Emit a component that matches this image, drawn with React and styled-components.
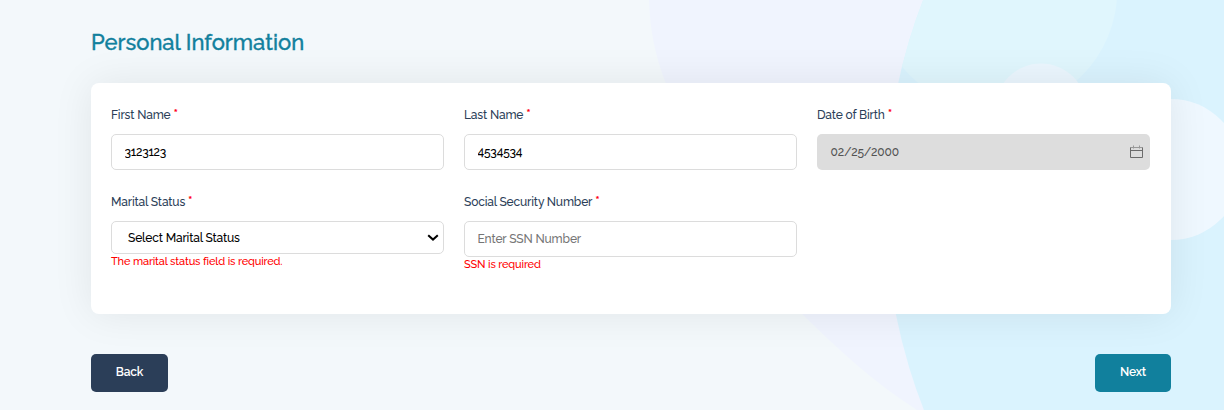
import React from "react";
import styled, { createGlobalStyle } from "styled-components";

const Global = createGlobalStyle`
  * { box-sizing: border-box; }
  body { margin: 0; font-family: Raleway, Lato, "Open Sans", sans-serif; font-weight: 500; overflow: hidden; }
`;
const Page = styled.div`
  display: grid; width: 1224px; height: 410px; background: #f3f8fb;
`;
const Backdrop = styled.svg`grid-area: 1 / 1; display: block;`;
const Content = styled.main`
  grid-area: 1 / 1; z-index: 1; width: 1080px; margin-left: 91px; padding-top: 26px;
`;
const Title = styled.h1`
  margin: 0 0 25px; height: 32px; line-height: 32px; font-size: 22px; font-weight: 500;
  color: #11809d; white-space: nowrap; -webkit-text-stroke: 0.35px #11809d;
`;
const Card = styled.section`
  display: grid; grid-template-columns: repeat(3, 333px); column-gap: 20px;
  grid-template-rows: 87px auto; align-items: start;
  height: 231px; padding: 22px 20px 0; background: #fff; border-radius: 8px;
  box-shadow: 0 0 40px rgba(0, 0, 0, 0.08);
`;
const Field = styled.div`display: flex; flex-direction: column;`;
const Label = styled.label`
  display: flex; gap: 3px; height: 29px; line-height: 20px; font-size: 12px; color: #2b3e58;
  white-space: nowrap; letter-spacing: -0.17px;
`;
const Star = styled.span`color: #ff0018; font-size: 13px; line-height: 17px; font-weight: 700;`;
const Input = styled.input`
  width: 100%; height: 36px; border: 1px solid #dcdcdc; border-radius: 5px; padding: 0 12.5px 1px;
  font: 500 12px/20px Raleway, Lato, "Open Sans", sans-serif; color: #000; background: #fff; outline: 0;
  letter-spacing: ${(p) => p.$track ?? -0.15}px;
  &::placeholder { color: #757575; opacity: 1; }
`;
const DateBox = styled.div`
  display: flex; align-items: center; justify-content: space-between; height: 36px;
  padding: 0 7px 0 13.5px; background: #ddd; border-radius: 5px; color: #545454;
  font-size: 12px; letter-spacing: -0.15px;
`;
const SelectBox = styled.div`
  display: flex; align-items: center; justify-content: space-between; height: 33px;
  padding: 0 4px 0 16px; border: 1px solid #dcdcdc; border-radius: 5px; background: #fff;
  font-size: 12px; color: #000; letter-spacing: -0.17px;
`;
const ErrorText = styled.span`
  height: 15px; line-height: 15px; font-size: 11px; color: #ff0000; letter-spacing: -0.15px;
`;
const Actions = styled.div`display: flex; justify-content: space-between; margin-top: 40px;`;
const Button = styled.button`
  width: ${(p) => p.$w}px; height: 38px; padding: 0 0 2px; border: 0; border-radius: 5px;
  background: ${(p) => p.$bg}; color: #fff; font: 600 12px/20px Raleway, Lato, "Open Sans", sans-serif;
  letter-spacing: -0.2px;
`;

function FormField({ label, children }) {
  return (
    <Field>
      <Label><span>{label}</span><Star>*</Star></Label>
      {children}
    </Field>
  );
}

export default function App() {
  return (
    <Page>
      <Global />
      <Backdrop width="1224" height="410" viewBox="0 0 1224 410" aria-hidden="true">
        <defs><clipPath id="sky"><circle cx="1450" cy="204" r="565" /></clipPath></defs>
        <path d="M649 0C650 31 655 55 666 84C688 170 738 254 802 314C839 350 873 382 917 410H1224V0Z" fill="#f0f4fe" />
        <circle cx="1450" cy="204" r="565" fill="#daf3fe" />
        <circle cx="996" cy="-10" r="121.3" fill="#e0f6fd" clipPath="url(#sky)" />
        <circle cx="1041" cy="109" r="45.5" fill="#ebf6fe" />
        <circle cx="1171" cy="169.5" r="70.5" fill="#eff8ff" />
      </Backdrop>
      <Content>
        <Title>Personal Information</Title>
        <Card>
          <FormField label="First Name"><Input defaultValue="3123123" $track={-0.22} /></FormField>
          <FormField label="Last Name"><Input defaultValue="4534534" $track={-0.2} /></FormField>
          <FormField label="Date of Birth">
            <DateBox>
              <span>02/25/2000</span>
              <svg width="13" height="14" viewBox="0 0 13 14" fill="none" stroke="#6b6b6b">
                <path d="M.5 2.5h12v10H.5zM.5 5.5h12" />
                <path d="M3.5 .5v3M9.5 .5v3M.5 2.5h12" stroke="#999" />
              </svg>
            </DateBox>
          </FormField>
          <FormField label="Marital Status">
            <SelectBox>
              <span>Select Marital Status</span>
              <svg width="12" height="8" viewBox="0 0 12 8" fill="none" stroke="#000" strokeWidth="2">
                <path d="M1.2 1.2L6 5.6L10.8 1.2" />
              </svg>
            </SelectBox>
            <ErrorText>The marital status field is required.</ErrorText>
          </FormField>
          <FormField label="Social Security Number">
            <Input placeholder="Enter SSN Number" />
            <ErrorText>SSN is required</ErrorText>
          </FormField>
        </Card>
        <Actions>
          <Button $w={77} $bg="#2b3e58">Back</Button>
          <Button $w={76} $bg="#11809d">Next</Button>
        </Actions>
      </Content>
    </Page>
  );
}
